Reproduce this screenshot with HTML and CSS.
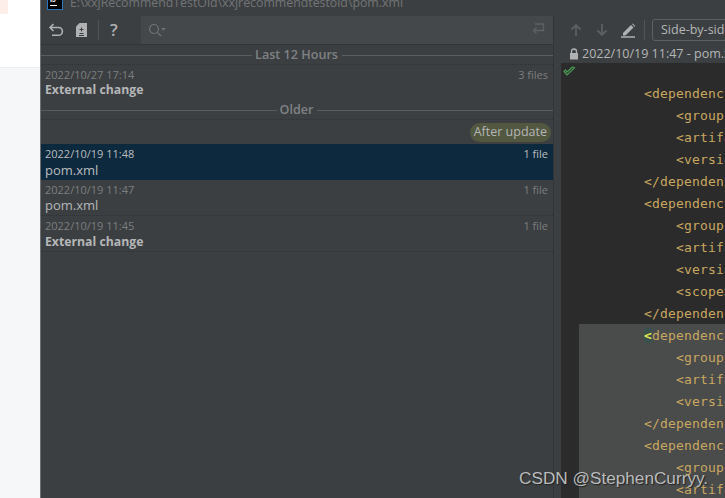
FILE: index.html
```html
<!DOCTYPE html>
<html lang="en">
<head>
<meta charset="utf-8">
<title>Local History</title>
<link rel="stylesheet" href="styles.css">
</head>
<body>
<div class="desk">
  <div class="desk-top"><div class="desk-tag"></div></div>
  <div class="desk-rest"></div>
</div>
<div class="window">
  <div class="titlebar">
    <div class="logo"><span class="logo-text">IJ</span><span class="logo-bar"></span></div>
    <div class="title">E:\xxjRecommendTestOld\xxjrecommendtestold\pom.xml</div>
  </div>
  <div class="main">
    <div class="left">
      <div class="toolbar">
        <div class="tools">
          <svg class="ic" viewBox="0 0 16 16" width="16" height="16"><path d="M5.500 2 2 5.500 5.500 9M2.500 5.500h8a3.800 3.800 0 0 1 0 7.800H4" fill="none" stroke="#afb1b3" stroke-width="1.600"/></svg>
          <svg class="ic ic-doc" viewBox="0 0 11 14" width="11" height="14"><path d="M3.500 0H11V14H0V3.500Z" fill="#afb1b3"/><path d="M5.500 4.500v4M3.500 6.500h4M3.500 10.500h4M3 12.500h5" stroke="#3c3f41" stroke-width="1"/></svg>
          <span class="sep"></span>
          <span class="help">?</span>
        </div>
        <div class="search">
          <svg viewBox="0 0 18 14" width="18" height="14"><circle cx="6" cy="6" r="4.500" fill="none" stroke="#6f7375" stroke-width="1.200"/><path d="M9.500 9.500 13 13" stroke="#6f7375" stroke-width="1.200"/><path d="M13 5h5l-2.500 2.500Z" fill="#6f7375"/></svg>
          <svg viewBox="0 0 14 14" width="14" height="14"><path d="M4 1h8.500v6.500H2.500M5.500 4.500 2.500 7.500 5.500 10.500" fill="none" stroke="#5d6163" stroke-width="1.300"/></svg>
        </div>
      </div>
      <div class="list">
        <div class="group"><span class="rule"></span><span class="group-name">Last 12 Hours</span><span class="rule"></span></div>
        <div class="row row-first">
          <div class="meta"><span>2022/10/27 17:14</span><span>3 files</span></div>
          <div class="name bold">External change</div>
        </div>
        <div class="group group-older"><span class="rule"></span><span class="group-name">Older</span><span class="rule"></span></div>
        <div class="label-row"><span class="badge">After update</span></div>
        <div class="row selected">
          <div class="meta"><span>2022/10/19 11:48</span><span>1 file</span></div>
          <div class="name">pom.xml</div>
        </div>
        <div class="row row-tight">
          <div class="meta"><span>2022/10/19 11:47</span><span>1 file</span></div>
          <div class="name">pom.xml</div>
        </div>
        <div class="row">
          <div class="meta"><span>2022/10/19 11:45</span><span>1 file</span></div>
          <div class="name bold">External change</div>
        </div>
      </div>
    </div>
    <div class="right">
      <div class="diff-toolbar">
        <svg class="arrow" viewBox="0 0 14 16" width="14" height="16"><path d="M7 14V3M2.500 7.500 7 3l4.500 4.500" fill="none" stroke="#5b5f61" stroke-width="1.800"/></svg>
        <svg class="arrow" viewBox="0 0 14 16" width="14" height="16"><path d="M7 2v11M2.500 8.500 7 13l4.500-4.500" fill="none" stroke="#5b5f61" stroke-width="1.800"/></svg>
        <svg class="pencil" viewBox="0 0 15 15" width="15" height="15"><path d="M2 10 10 2l2.500 2.500-8 8H2ZM11 1l.8-.5 2.500 2.500-.8.800Z" fill="#afb1b3"/><path d="M0 14h14" stroke="#afb1b3" stroke-width="1.500"/></svg>
        <span class="sep sep-right"></span>
        <span class="combo">Side-by-side viewer</span>
      </div>
      <div class="file-info">
        <svg viewBox="0 0 10 12" width="10" height="12"><path d="M2.500 5V3.500a2.500 2.500 0 0 1 5 0V5" fill="none" stroke="#afb1b3" stroke-width="1.300"/><rect x="1" y="5" width="8" height="6.500" fill="#afb1b3"/></svg>
        <span>2022/10/19 11:47 - pom.xml</span>
      </div>
      <div class="editor">
        <div class="gutter">
          <svg viewBox="0 0 13 11" width="13" height="11"><path d="M1 5.500 4 9 11.500 2 9.500 1 4 6 2.500 4Z" fill="none" stroke="#499c54" stroke-width="1.200"/></svg>
        </div>
        <div class="code">
          <div class="line">&lt;dependency&gt;</div>
          <div class="line in">&lt;groupId&gt;</div>
          <div class="line in">&lt;artifactId&gt;</div>
          <div class="line in">&lt;version&gt;</div>
          <div class="line">&lt;/dependency&gt;</div>
          <div class="line">&lt;dependency&gt;</div>
          <div class="line in">&lt;groupId&gt;</div>
          <div class="line in">&lt;artifactId&gt;</div>
          <div class="line in">&lt;version&gt;</div>
          <div class="line in">&lt;scope&gt;</div>
          <div class="line">&lt;/dependency&gt;</div>
          <div class="line changed"><span class="match">&lt;</span>dependency&gt;</div>
          <div class="line in changed">&lt;groupId&gt;</div>
          <div class="line in changed">&lt;artifactId&gt;</div>
          <div class="line in changed">&lt;version&gt;</div>
          <div class="line changed">&lt;/dependency&gt;</div>
          <div class="line changed">&lt;dependency&gt;</div>
          <div class="line in changed">&lt;groupId&gt;</div>
          <div class="line in changed">&lt;artifactId&gt;</div>
        </div>
      </div>
    </div>
  </div>
</div>
<div class="watermark">CSDN @StephenCurryy.</div>
</body>
</html>
```
FILE: styles.css
```css
* { box-sizing: border-box; }
html, body { margin: 0; height: 100%; }
body {
  display: flex;
  height: 498px;
  width: 725px;
  overflow: hidden;
  font-family: "Open Sans", "Noto Sans", sans-serif;
  background: #3c3f41;
  position: relative;
}
.desk {
  width: 40px;
  flex: none;
  display: flex;
  flex-direction: column;
}
.desk-top {
  height: 68px;
  background: #fff;
  border-bottom: 1px solid #eceef0;
}
.desk-tag { width: 8px; height: 14px; background: #fdeee9; }
.desk-rest { flex: 1; background: #f6f7f9; }
.window {
  flex: 1;
  min-width: 0;
  display: flex;
  flex-direction: column;
  background: #3c3f41;
  border-left: 1px solid #6e7072;
}
.titlebar {
  height: 16px;
  display: flex;
  flex: none;
  overflow: hidden;
  padding-left: 6px;
}
.logo {
  width: 16px;
  height: 17px;
  margin-top: -7px;
  background: #000;
  border: 1px solid #2675bf;
  flex: none;
  display: flex;
  flex-direction: column;
  padding: 1px 2px;
}
.logo-text { color: #fff; font-size: 7px; line-height: 9px; font-weight: 700; font-family: "Liberation Sans", sans-serif; }
.logo-bar { width: 7px; height: 1px; background: #fff; margin-top: 1px; }
.title {
  margin-left: 7px;
  font-size: 12.340px;
  line-height: 6px;
  color: #727577;
  white-space: nowrap;
}
.main { flex: 1; display: flex; min-height: 0; }
.left {
  width: 513px;
  flex: none;
  display: flex;
  flex-direction: column;
  border-right: 1px solid #323537;
}
.toolbar {
  height: 29px;
  flex: none;
  display: flex;
  border-bottom: 1px solid #323537;
}
.tools {
  width: 100px;
  flex: none;
  display: flex;
  align-items: center;
  padding-left: 7px;
}
.ic { flex: none; }
.ic-doc { margin-left: 12px; }
.sep { width: 1px; height: 20px; background: #515456; margin-left: 11px; flex: none; }
.help {
  margin-left: 11px;
  color: #afb1b3;
  font-size: 17px;
  font-weight: 600;
  line-height: 20px;
}
.search {
  flex: 1;
  background: #45484a;
  display: flex;
  align-items: center;
  justify-content: space-between;
  padding: 0 8px 0 7px;
}
.list { flex: 1; display: flex; flex-direction: column; }
.group {
  height: 20px;
  display: flex;
  align-items: center;
  gap: 4px;
  border-bottom: 1px dotted #2f3234;
  flex: none;
}
.group-older { height: 19px; }
.rule { flex: 1; height: 1px; background: #5a5d5f; margin-top: 1px; }
.group-name { font-size: 12.600px; font-weight: 600; color: #7f8284; line-height: 16px; margin-left: -1px; }
.row {
  height: 36px;
  padding: 1px 5px 0 4px;
  flex: none;
  border-bottom: 1px dotted #2f3234;
}
.row-first { border-bottom: 0; }
.meta {
  display: flex;
  justify-content: space-between;
  font-size: 11px;
  line-height: 18px;
  color: #7b7e80;
}
.name { font-size: 13px; line-height: 18px; color: #b4b6b8; margin-top: -2px; }
.row-first .name { margin-top: -3px; }
.row-tight .name { margin-top: -3px; }
.bold { font-weight: 700; font-size: 12.250px; }
.selected { background: #0d293e; border-bottom: 0; }
.selected .meta { color: #bbbdbf; }
.selected .name { color: #bbbdbf; }
.label-row {
  height: 24px;
  display: flex;
  justify-content: flex-end;
  align-items: center;
  padding-right: 2px;
}
.badge {
  height: 19px;
  padding: 0 4px;
  background: #52573f;
  border-radius: 10px;
  font-size: 12.500px;
  line-height: 18px;
  color: #b4b6b8;
}
.right { flex: 1; min-width: 0; display: flex; flex-direction: column; overflow: hidden; }
.diff-toolbar {
  height: 28px;
  flex: none;
  display: flex;
  align-items: center;
  padding-left: 15px;
  gap: 12px;
}
.diff-toolbar > * { flex: none; }
.sep-right { margin-left: -4px; height: 20px; }
.combo {
  margin-left: -5px;
  height: 22px;
  border: 1px solid #5e6163;
  border-radius: 3px;
  padding: 0 8px;
  font-size: 12.500px;
  line-height: 20px;
  color: #b4b6b8;
  white-space: nowrap;
}
.file-info {
  height: 19px;
  flex: none;
  display: flex;
  align-items: center;
  gap: 3px;
  padding-left: 15px;
  font-size: 12.500px;
  color: #b4b6b8;
  white-space: nowrap;
}
.file-info svg { flex: none; }
.editor {
  flex: 1;
  min-height: 0;
  margin-left: 7px;
  background: #2b2b2b;
  display: flex;
  overflow: hidden;
}
.gutter { width: 18px; flex: none; padding: 3px 0 0 2px; }
.gutter svg { display: block; }
.code { flex: 1; min-width: 0; padding-top: 19px; }
.line {
  height: 22px;
  padding-left: 65px;
  font-family: "DejaVu Sans Mono", monospace;
  font-size: 13px;
  letter-spacing: .17px;
  line-height: 23px;
  color: #c9a760;
  white-space: nowrap;
  overflow: hidden;
}
.in { padding-left: 97px; }
.changed { background: #4a4c4b; }
.match { background: #3b514d; color: #e7e94b; font-weight: 700; }
.watermark {
  position: absolute;
  left: 519px;
  top: 467px;
  font-family: "Liberation Sans", sans-serif;
  font-size: 17.200px;
  line-height: 22px;
  color: #b9bbbd;
  text-shadow: 1px 1px 1px #222;
  white-space: nowrap;
}
```
